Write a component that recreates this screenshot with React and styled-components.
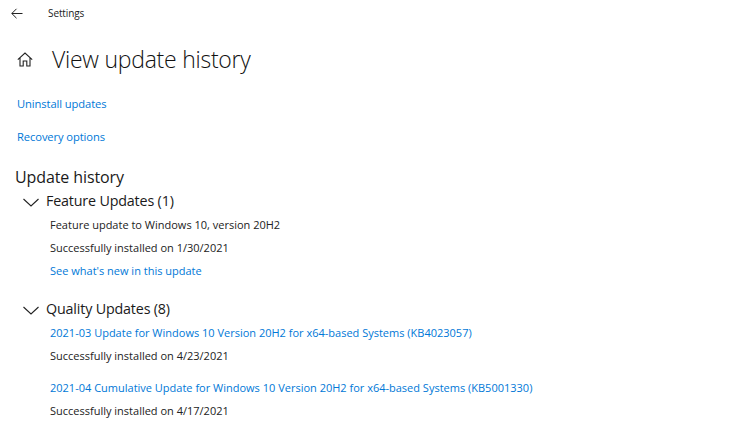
import React from 'react';
import styled, { createGlobalStyle } from 'styled-components';

const Global = createGlobalStyle`
  html, body { margin: 0; padding: 0; background: #fff; }
  body { font-family: "Open Sans", "Noto Sans", sans-serif; color: #1a1a1a; }
`;
const Page = styled.div`
  width: 750px; height: 429px; overflow: hidden; display: flex; flex-direction: column; box-sizing: border-box;
`;
const TopBar = styled.div`
  display: flex; align-items: center; height: 26px; padding-left: 11px;
`;
const BackButton = styled.span`
  display: flex; width: 37px; color: #222;
`;
const AppName = styled.span`
  font-size: 10px; letter-spacing: -0.1px; color: #222;
`;
const TitleRow = styled.div`
  display: flex; align-items: center; height: 36px; margin-top: 15px; padding-left: 17px;
`;
const HomeIcon = styled.span`
  display: flex; width: 35px; color: #222;
`;
const Title = styled.h1`
  margin: 0; font-size: 23px; font-weight: 300; letter-spacing: -0.25px; color: #111;
`;
const TopLinks = styled.div`
  display: flex; flex-direction: column; gap: 17px; margin-top: 19px; padding-left: 17px;
`;
const Link = styled.a`
  display: block; font-size: 11.2px; line-height: 16px; color: #0078d7; letter-spacing: -0.1px;
`;
const Section = styled.h2`
  margin: 22px 0 0 15px; font-size: 16px; line-height: 20px; font-weight: 400; letter-spacing: -0.1px; color: #1a1a1a;
`;
const GroupHead = styled.div`
  display: flex; align-items: center; height: 20px; padding-left: 23px; margin-top: ${p => p.$top}px;
`;
const Chevron = styled.span`
  display: flex; width: 23px; margin-top: 5px; color: #222;
`;
const GroupName = styled.span`
  font-size: 14.3px; letter-spacing: -0.17px; color: #1a1a1a;
`;
const Rows = styled.div`
  display: flex; flex-direction: column; padding-left: 50px; margin-top: ${p => p.$top}px;
`;
const Row = styled.div`
  font-size: 11px; line-height: 16px; height: ${p => p.$h}px; color: #222;
`;
const RowLink = styled.a`
  display: block; font-size: 11px; line-height: 16px; height: ${p => p.$h}px; color: #0078d7;
`;

const Arrow = () => (
  <svg width="12" height="11" viewBox="0 0 12 11" fill="none" stroke="currentColor" strokeWidth="1">
    <path d="M0.8 5.5H11.5M5.5 0.8L0.8 5.5L5.5 10.2" />
  </svg>
);
const Home = () => (
  <svg width="16" height="15" viewBox="0 0 16 15" fill="none" stroke="currentColor" strokeWidth="1.1">
    <path d="M0.8 7.6L8 1L15.2 7.6M3 5.8V14H6.2V9H9.8V14H13V5.8" />
  </svg>
);
const Down = () => (
  <svg width="16" height="9" viewBox="0 0 16 9" fill="none" stroke="currentColor" strokeWidth="1.1">
    <path d="M0.5 1L8 8L15.5 1" />
  </svg>
);

export default function App() {
  return (
    <Page>
      <Global />
      <TopBar>
        <BackButton><Arrow /></BackButton>
        <AppName>Settings</AppName>
      </TopBar>
      <TitleRow>
        <HomeIcon><Home /></HomeIcon>
        <Title>View update history</Title>
      </TitleRow>
      <TopLinks>
        <Link>Uninstall updates</Link>
        <Link>Recovery options</Link>
      </TopLinks>
      <Section>Update history</Section>
      <GroupHead $top={3}>
        <Chevron><Down /></Chevron>
        <GroupName>Feature Updates (1)</GroupName>
      </GroupHead>
      <Rows $top={7}>
        <Row $h={23}>Feature update to Windows 10, version 20H2</Row>
        <Row $h={23}>Successfully installed on 1/30/2021</Row>
        <RowLink $h={16}>See what's new in this update</RowLink>
      </Rows>
      <GroupHead $top={19}>
        <Chevron><Down /></Chevron>
        <GroupName>Quality Updates (8)</GroupName>
      </GroupHead>
      <Rows $top={7}>
        <RowLink $h={23}>2021-03 Update for Windows 10 Version 20H2 for x64-based Systems (KB4023057)</RowLink>
        <Row $h={32}>Successfully installed on 4/23/2021</Row>
        <RowLink $h={23}>2021-04 Cumulative Update for Windows 10 Version 20H2 for x64-based Systems (KB5001330)</RowLink>
        <Row $h={16}>Successfully installed on 4/17/2021</Row>
      </Rows>
    </Page>
  );
}
